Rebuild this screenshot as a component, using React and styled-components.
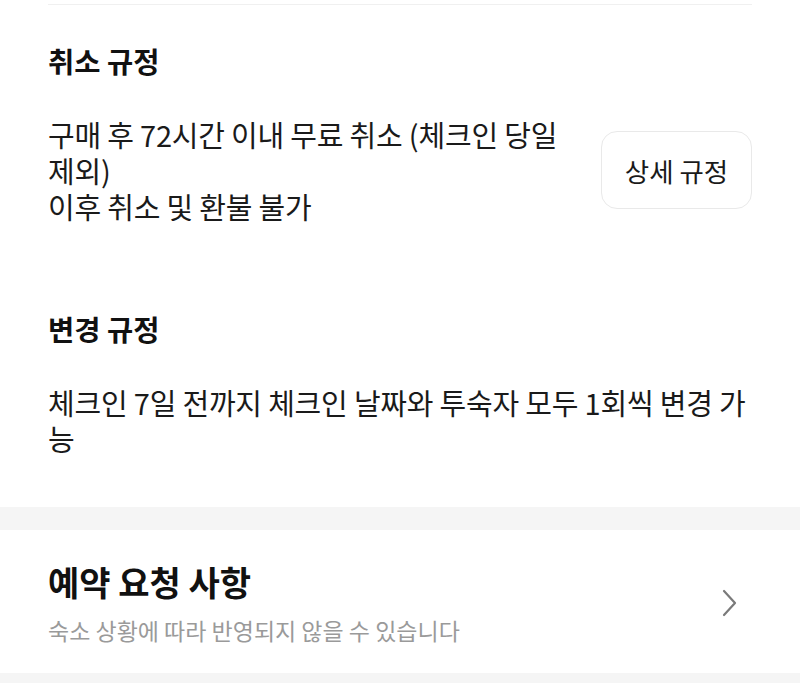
import React from 'react';
import styled, { createGlobalStyle } from 'styled-components';

const GlobalStyle = createGlobalStyle`
  html, body {
    margin: 0;
    padding: 0;
    background: #ffffff;
  }
  body {
    font-family: 'Noto Sans CJK KR', 'Noto Sans', sans-serif;
    color: #111111;
  }
`;

const App = () => {
  return (
    <Page>
      <GlobalStyle />
      <Divider />
      <Section>
        <SectionTitle>취소 규정</SectionTitle>
        <PolicyRow>
          <PolicyText>
            구매 후 72시간 이내 무료 취소 (체크인 당일 제외)
            <br />
            이후 취소 및 환불 불가
          </PolicyText>
          <DetailButton type="button">상세 규정</DetailButton>
        </PolicyRow>
      </Section>
      <Section $gap={87}>
        <SectionTitle>변경 규정</SectionTitle>
        <PolicyText>
          체크인 7일 전까지 체크인 날짜와 투숙자 모두 1회씩 변경 가능
        </PolicyText>
      </Section>
      <Band $top={51} />
      <RequestRow>
        <RequestInfo>
          <RequestTitle>예약 요청 사항</RequestTitle>
          <RequestSub>숙소 상황에 따라 반영되지 않을 수 있습니다</RequestSub>
        </RequestInfo>
        <Chevron width="20" height="30" viewBox="0 0 20 30">
          <path d="M4 3 L15 15 L4 27" fill="none" stroke="#7a7a7a" strokeWidth="2.2" strokeLinecap="round" strokeLinejoin="round" />
        </Chevron>
      </RequestRow>
      <Band $top={0} />
    </Page>
  );
};

const Page = styled.div`
  width: 800px;
  height: 683px;
  overflow: hidden;
  background: #ffffff;
`;

const Divider = styled.div`
  height: 1px;
  margin: 4px 48px 0;
  background: #f0f0f0;
`;

const Section = styled.section`
  padding: 0 48px;
  margin-top: ${(p) => (p.$gap ? p.$gap : 0)}px;
`;

const SectionTitle = styled.h2`
  margin: 38px 0 37px;
  font-size: 28.5px;
  line-height: 36px;
  font-weight: 700;
  color: #111111;
`;

const PolicyRow = styled.div`
  display: flex;
  align-items: center;
  gap: 24px;
`;

const PolicyText = styled.p`
  flex: 1;
  margin: 0;
  font-size: 29px;
  line-height: 36px;
  font-weight: 400;
  color: #1a1a1a;
  letter-spacing: -0.2px;
  word-break: break-all;
`;

const DetailButton = styled.button`
  flex: none;
  width: 151px;
  height: 78px;
  padding: 0;
  border: 1.5px solid #e9e9e9;
  border-radius: 16px;
  background: #ffffff;
  font-family: inherit;
  font-size: 26.5px;
  color: #1a1a1a;
  cursor: pointer;
`;

const Band = styled.div`
  height: 23px;
  margin-top: ${(p) => p.$top}px;
  background: #f5f5f5;
`;

const RequestRow = styled.div`
  display: flex;
  align-items: center;
  justify-content: space-between;
  padding: 31px 60px 28px 48px;
`;

const RequestInfo = styled.div`
  display: flex;
  flex-direction: column;
  gap: 12px;
`;

const RequestTitle = styled.h3`
  margin: 0;
  font-size: 34px;
  line-height: 42px;
  font-weight: 700;
  color: #111111;
`;

const RequestSub = styled.p`
  margin: 0;
  font-size: 23px;
  line-height: 30px;
  color: #9a9a9a;
`;

const Chevron = styled.svg`
  flex: none;
`;

export default App;
